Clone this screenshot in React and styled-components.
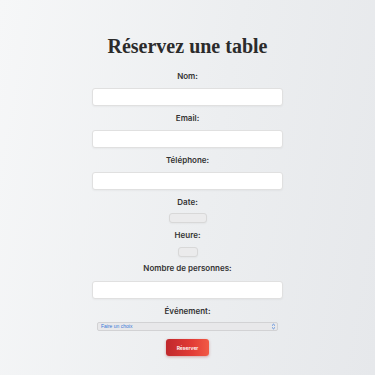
import React from "react";
import styled, { createGlobalStyle } from "styled-components";

const Global = createGlobalStyle`
  html, body {
    margin: 0;
    padding: 0;
  }
  body {
    background: linear-gradient(100deg, #f6f7f8 0%, #eceef0 55%, #e6e8eb 100%);
    min-height: 375px;
    font-family: "Inter", "Liberation Sans", sans-serif;
  }
`;

const Page = styled.div`
  width: 375px;
  min-height: 375px;
  display: flex;
  flex-direction: column;
  align-items: center;
  padding-top: 34px;
  box-sizing: border-box;
`;

const Title = styled.h1`
  margin: 0 0 13px;
  font-family: "Liberation Serif", "DejaVu Serif", serif;
  font-weight: 700;
  font-size: 20px;
  line-height: 24px;
  color: #2b2b2b;
`;

const Form = styled.form`
  display: flex;
  flex-direction: column;
  align-items: center;
  width: 191px;
  font-size: 8px;
`;

const Label = styled.label`
  font-family: "Inter", "Liberation Sans", sans-serif;
  font-weight: 600;
  font-size: 8px;
  line-height: 10px;
  color: #333;
  margin-bottom: ${(p) => p.mb || "7px"};
`;

const Input = styled.input`
  display: block;
  box-sizing: border-box;
  width: ${(p) => p.w || "191px"};
  height: ${(p) => p.h || "18px"};
  margin: 0 0 ${(p) => p.mb || "7px"};
  padding: 0 4px;
  border: 1px solid ${(p) => (p.gray ? "#d8d8d8" : "#e0e0e0")};
  border-radius: 3px;
  background: ${(p) => (p.gray ? "#ebebec" : "#fff")};
  box-shadow: 0 1px 2px rgba(0, 0, 0, 0.04);
  outline: none;
  font-size: 6px;
`;

const SelectWrap = styled.div`
  position: relative;
  width: 181px;
  height: 9px;
  margin-bottom: 8px;
  font-size: 5px;
  line-height: 9px;
`;

const Select = styled.select`
  display: block;
  appearance: none;
  -webkit-appearance: none;
  box-sizing: border-box;
  width: 100%;
  height: 9px;
  margin: 0;
  padding: 0 0 0 3px;
  border: 1px solid #d2d2d4;
  border-radius: 2px;
  background: #e8e8ea;
  color: #3a78d8;
  font-family: "Liberation Sans", sans-serif;
  font-size: 5px;
  line-height: 7px;
  outline: none;
`;

const Arrows = styled.svg`
  position: absolute;
  right: 2px;
  top: 1px;
  width: 5px;
  height: 7px;
  pointer-events: none;
`;

const Button = styled.button`
  width: 43px;
  height: 17px;
  border: none;
  border-radius: 3px;
  background: linear-gradient(90deg, #c0282c 0%, #e23b36 60%, #f15a45 100%);
  box-shadow: 0 1px 3px rgba(160, 30, 30, 0.35);
  color: #fff;
  font-family: "Inter", "Liberation Sans", sans-serif;
  font-weight: 600;
  font-size: 5px;
  padding: 0;
  cursor: pointer;
`;

export default function App() {
  return (
    <>
      <Global />
      <Page>
        <Title>Réservez une table</Title>
        <Form onSubmit={(e) => e.preventDefault()}>
          <Label htmlFor="nom">Nom:</Label>
          <Input id="nom" type="text" />

          <Label htmlFor="email">Email:</Label>
          <Input id="email" type="email" />

          <Label htmlFor="tel">Téléphone:</Label>
          <Input id="tel" type="tel" />

          <Label htmlFor="date" mb="6px">Date:</Label>
          <Input id="date" type="text" gray w="38px" h="10px" />

          <Label htmlFor="heure">Heure:</Label>
          <Input id="heure" type="text" gray w="20px" h="10px" mb="6px" />

          <Label htmlFor="nb" mb="8px">Nombre de personnes:</Label>
          <Input id="nb" type="number" />

          <Label htmlFor="event" mb="6px">Événement:</Label>
          <SelectWrap>
            <Select id="event" defaultValue="">
              <option value="">Faire un choix</option>
              <option value="anniv">Anniversaire</option>
              <option value="mariage">Mariage</option>
            </Select>
            <Arrows viewBox="0 0 5 7">
              <path d="M1 2.6 L2.5 1.2 L4 2.6" fill="none" stroke="#3a78d8" strokeWidth="0.8" />
              <path d="M1 4.4 L2.5 5.8 L4 4.4" fill="none" stroke="#3a78d8" strokeWidth="0.8" />
            </Arrows>
          </SelectWrap>

          <Button type="submit">Réserver</Button>
        </Form>
      </Page>
    </>
  );
}
